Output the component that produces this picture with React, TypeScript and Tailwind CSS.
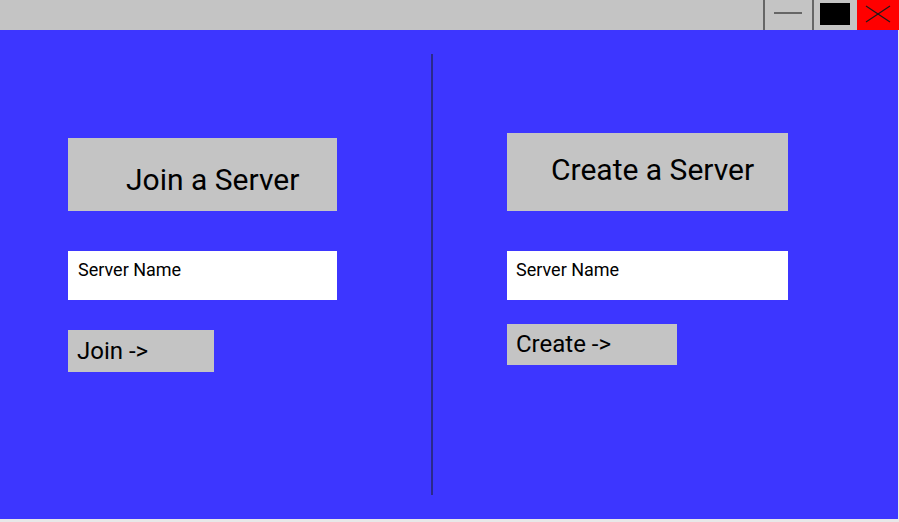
import React from 'react';

const font = { fontFamily: 'Roboto, "Noto Sans", sans-serif' };

const TitleBar: React.FC = () => (
  <div className="flex h-[30px] justify-end bg-[#c4c4c4]">
    <div className="w-[2px] bg-[#666666]" />
    <div className="flex w-[47px] items-start pl-[9px] pt-[12px]">
      <div className="h-[2px] w-[28px] bg-[#666666]" />
    </div>
    <div className="w-[2px] bg-[#666666]" />
    <div className="w-[43px] pl-[6px] pt-[3px]">
      <div className="h-[22px] w-[30px] bg-black" />
    </div>
    <div className="flex w-[42px] items-start justify-center bg-[#ff0000] pt-[5px]">
      <svg width="26" height="18" viewBox="0 0 26 18">
        <line x1="1" y1="1" x2="25" y2="17" stroke="#1a1a1a" strokeWidth="1.2" />
        <line x1="25" y1="1" x2="1" y2="17" stroke="#1a1a1a" strokeWidth="1.2" />
      </svg>
    </div>
  </div>
);

const App: React.FC = () => {
  return (
    <div className="h-[522px] w-[899px] bg-[#e8e8e8]" style={font}>
      <TitleBar />
      <div className="flex h-[489px] w-[898px] bg-[#3d36ff]">
        {/* join */}
        <div className="flex w-[431px] flex-col pl-[68px] pt-[108px]">
          <div className="h-[73px] w-[269px] bg-[#c4c4c4] pl-[58px] pt-[27px] text-[30px] leading-none text-black">
            Join a Server
          </div>
          <div className="mt-[40px] h-[49px] w-[269px] bg-white pl-[10px] pt-[10px] text-[18px] leading-none text-black">
            Server Name
          </div>
          <button className="mt-[30px] h-[42px] w-[146px] bg-[#c4c4c4] pl-[9px] pt-[9px] text-left text-[24px] leading-none text-black">
            <div className="flex h-full items-start">Join -&gt;</div>
          </button>
        </div>

        <div className="mt-[24px] h-[441px] w-[2px] bg-[#2a2a8c]" />

        {/* create */}
        <div className="flex flex-col pl-[74px] pt-[103px]">
          <div className="h-[78px] w-[281px] bg-[#c4c4c4] pl-[44px] pt-[22px] text-[30px] leading-none text-black">
            Create a Server
          </div>
          <div className="mt-[40px] h-[49px] w-[281px] bg-white pl-[9px] pt-[10px] text-[18px] leading-none text-black">
            Server Name
          </div>
          <button className="mt-[24px] h-[41px] w-[170px] bg-[#c4c4c4] pl-[9px] pt-[8px] text-left text-[24px] leading-none text-black">
            <div className="flex h-full items-start">Create -&gt;</div>
          </button>
        </div>
      </div>
    </div>
  );
};

export default App;
